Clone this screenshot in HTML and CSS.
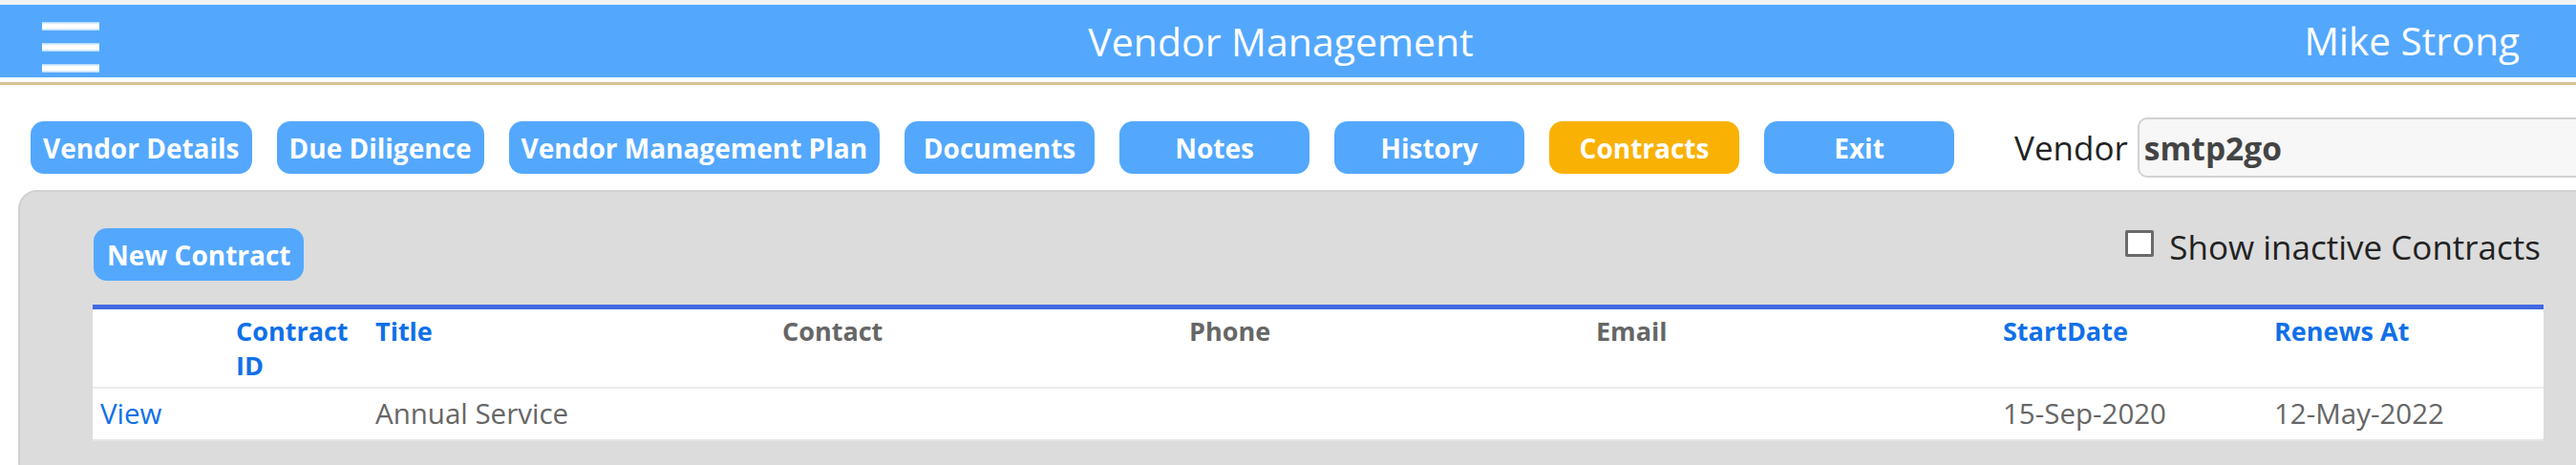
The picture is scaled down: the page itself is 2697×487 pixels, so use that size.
FILE: index.html
```html
<!DOCTYPE html>
<html lang="en">
<head>
<meta charset="utf-8">
<title>Vendor Management</title>
<link rel="stylesheet" href="styles.css">
</head>
<body>
<div class="topstrip"></div>
<header class="appbar">
  <div class="menu" aria-label="Menu"><span></span><span></span><span></span></div>
  <h1 class="apptitle">Vendor Management</h1>
  <div class="user">Mike Strong</div>
</header>
<div class="rule"></div>
<nav class="tabs">
  <button class="tab">Vendor Details</button>
  <button class="tab">Due Diligence</button>
  <button class="tab">Vendor Management Plan</button>
  <button class="tab">Documents</button>
  <button class="tab">Notes</button>
  <button class="tab">History</button>
  <button class="tab active">Contracts</button>
  <button class="tab">Exit</button>
  <div class="vendor-field">
    <label class="vendor-label" for="vendor">Vendor</label>
    <input class="vendor-input" id="vendor" type="text" value="smtp2go">
  </div>
</nav>
<section class="panel">
  <div class="panel-top">
    <button class="tab new">New Contract</button>
    <label class="inactive"><input type="checkbox" class="check"><span>Show inactive Contracts</span></label>
  </div>
  <table class="grid">
    <colgroup>
      <col class="c-view"><col class="c-id"><col class="c-wide"><col class="c-wide"><col class="c-wide"><col class="c-wide"><col class="c-date"><col class="c-date2">
    </colgroup>
    <thead>
      <tr>
        <th></th>
        <th class="sort">Contract ID</th>
        <th class="sort">Title</th>
        <th>Contact</th>
        <th>Phone</th>
        <th>Email</th>
        <th class="sort">StartDate</th>
        <th class="sort">Renews At</th>
      </tr>
    </thead>
    <tbody>
      <tr>
        <td><a href="#">View</a></td>
        <td></td>
        <td>Annual Service</td>
        <td></td>
        <td></td>
        <td></td>
        <td>15-Sep-2020</td>
        <td>12-May-2022</td>
      </tr>
    </tbody>
  </table>
</section>
</body>
</html>
```
FILE: styles.css
```css
html, body {
  margin: 0;
  padding: 0;
  overflow: hidden;
  background: #ffffff;
}

body {
  font-family: "Open Sans", "Noto Sans", sans-serif;
  color: #222;
}

.topstrip {
  height: 5px;
  background: #f1f2f4;
}

.appbar {
  display: grid;
  grid-template-columns: 1fr auto 1fr;
  align-items: center;
  height: 76px;
  padding: 0 59px 0 44px;
  background: #53a8fe;
  color: #ffffff;
}

.menu {
  display: flex;
  flex-direction: column;
  gap: 13px;
  width: 60px;
  align-self: start;
  margin-top: 18px;
  justify-self: start;
}

.menu span {
  display: block;
  height: 9px;
  background: linear-gradient(rgba(255,255,255,0.5), #ffffff 30%, #ffffff 70%, rgba(255,255,255,0.5));
}

.apptitle {
  margin: 0;
  font-size: 41px;
  font-weight: 400;
  line-height: 1;
}

.user {
  justify-self: end;
  font-size: 40.5px;
  line-height: 1;
}

.rule {
  height: 3px;
  margin-top: 5px;
  background: linear-gradient(#cdbfa3, #e4c68b);
}

.tabs {
  display: flex;
  align-items: center;
  gap: 26px;
  margin-top: 34px;
  padding-left: 32px;
}

.tab {
  flex: none;
  height: 55px;
  min-width: 199px;
  padding: 0 13px;
  border: 0;
  border-radius: 14px;
  background: #53a8fe;
  color: #ffffff;
  font-family: "Open Sans", "Noto Sans", sans-serif;
  font-size: 28px;
  font-weight: 700;
  cursor: pointer;
}

.tab.active {
  background: #f9b103;
}

.tab.new {
  min-width: 0;
  padding: 0 14px;
}

.vendor-field {
  display: flex;
  align-items: center;
  gap: 10px;
  margin-left: 37px;
  flex: none;
}

.vendor-label {
  font-size: 35px;
  color: #222;
}

.vendor-input {
  box-sizing: border-box;
  width: 502px;
  height: 63px;
  padding: 0 5px;
  border: 2px solid #d2d2d2;
  border-radius: 10px;
  background: #f7f7f7;
  color: #444;
  font-family: "Open Sans", "Noto Sans", sans-serif;
  font-size: 33.5px;
  font-weight: 700;
}

.panel {
  box-sizing: border-box;
  width: 2722px;
  margin: 13px 0 0 19px;
  padding: 38px 76px 40px 76px;
  background: #dcdcdc;
  border: 2px solid #d1d1d1;
  border-radius: 20px;
}

.panel-top {
  display: flex;
  justify-content: space-between;
  align-items: flex-start;
  margin-bottom: 25px;
  padding-left: 1px;
}

.inactive {
  display: flex;
  align-items: flex-start;
  gap: 16px;
  margin-right: 3px;
  font-size: 35px;
  line-height: 40px;
  color: #222;
}

.check {
  appearance: none;
  -webkit-appearance: none;
  box-sizing: border-box;
  width: 30px;
  height: 28px;
  margin: 2px 0 0;
  border: 3px solid #6a6a6a;
  border-radius: 2px;
  background: #ffffff;
}

.grid {
  width: 100%;
  table-layout: fixed;
  border-collapse: collapse;
  background: #ffffff;
  border-top: 5px solid #4169e1;
  border-bottom: 2px solid #e6e6e6;
}

.c-view { width: 142px; }
.c-id { width: 146px; }
.c-wide { width: 426px; }
.c-date { width: 284px; }
.c-date2 { width: auto; }

.grid th,
.grid td {
  text-align: left;
  vertical-align: top;
  font-size: 27px;
  line-height: 36px;
}

.grid th {
  padding: 5px 8px 4px;
  font-weight: 700;
  color: #666;
}

.grid th.sort {
  color: #1070e8;
}

.grid thead tr {
  border-bottom: 2px solid #ececec;
}

.grid td {
  padding: 8px 8px 9px;
  font-size: 29.5px;
  color: #666;
  font-weight: 400;
}

.grid td a {
  color: #1070e8;
  text-decoration: none;
}
```
